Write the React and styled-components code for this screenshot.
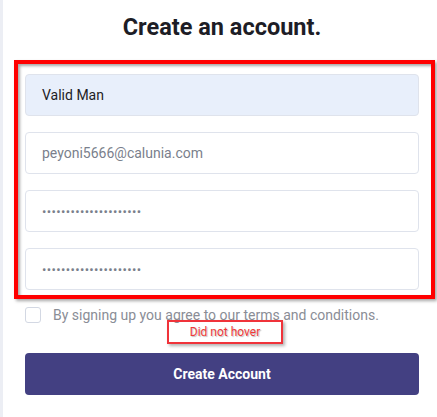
import React from 'react';
import styled, { createGlobalStyle } from 'styled-components';

const GlobalStyle = createGlobalStyle`
    html, body {
        margin: 0;
        padding: 0;
        background: #fff;
        font-family: Roboto, "Liberation Sans", sans-serif;
    }
`

const Page = styled.div`
    width: 437px;
    height: 417px;
    box-sizing: border-box;
    border-left: 3px solid #eceef4;
    padding: 12px 18px 0 22px;
    overflow: hidden;
`

const Title = styled.h1`
    margin: 0 0 32px;
    text-align: center;
    font-size: 23.5px;
    font-weight: 700;
    color: #1d1d26;
    line-height: 30px;
`

const Fields = styled.div`
    position: relative;
    display: flex;
    flex-direction: column;
    gap: 16px;
`

const Highlight = styled.div`
    position: absolute;
    top: -14px;
    bottom: -9px;
    left: -11px;
    right: -16px;
    border: 4px solid #ff0000;
    box-shadow: 2px 2px 3px rgba(0, 0, 0, 0.35), inset 2px 2px 3px rgba(0, 0, 0, 0.35);
    pointer-events: none;
`

const Input = styled.div`
    height: 42px;
    box-sizing: border-box;
    display: flex;
    align-items: center;
    padding: 0 16px;
    border: 1px solid #dfe3ec;
    border-radius: 4px;
    background: ${p => (p.$filled ? '#e8effb' : '#fff')};
    color: ${p => (p.$filled ? '#1d1d26' : '#7a7f8c')};
    font-size: ${p => (p.$secret ? '13px' : '14px')};
    letter-spacing: ${p => (p.$secret ? '0.35px' : '0')};
`

const Terms = styled.label`
    position: relative;
    display: flex;
    align-items: center;
    gap: 12px;
    margin-top: 17px;
    color: #8a8d96;
    font-size: 14px;
`

const Box = styled.span`
    width: 16px;
    height: 16px;
    box-sizing: border-box;
    border: 1px solid #d3d8e3;
    border-radius: 3px;
    flex-shrink: 0;
`

const Note = styled.div`
    position: absolute;
    left: 142px;
    top: 13px;
    width: 116px;
    height: 24px;
    box-sizing: border-box;
    border: 2px solid #f0333a;
    box-shadow: 2px 2px 3px rgba(0, 0, 0, 0.3);
    color: #f03a3a;
    font-size: 12px;
    text-align: center;
    line-height: 20px;
    text-shadow: 1px 1px 1px rgba(0, 0, 0, 0.25);
`

const Button = styled.button`
    display: block;
    width: 100%;
    height: 42px;
    margin-top: 30px;
    border: none;
    border-radius: 4px;
    background: #434082;
    color: #fff;
    font-family: Roboto, "Liberation Sans", sans-serif;
    font-size: 14px;
    font-weight: 700;
`

const App = () => {
    return (
        <Page>
            <GlobalStyle />
            <Title>Create an account.</Title>
            <Fields>
                <Input $filled>Valid Man</Input>
                <Input>peyoni5666@calunia.com</Input>
                <Input $secret>•••••••••••••••••••••</Input>
                <Input $secret>•••••••••••••••••••••</Input>
                <Highlight />
            </Fields>
            <Terms>
                <Box />
                By signing up you agree to our terms and conditions.
                <Note>Did not hover</Note>
            </Terms>
            <Button>Create Account</Button>
        </Page>
    )
}

export default App;
